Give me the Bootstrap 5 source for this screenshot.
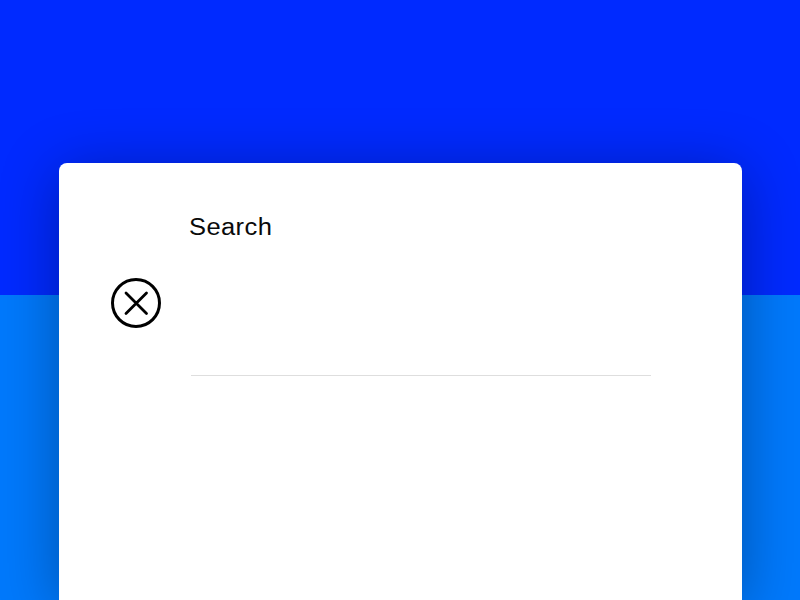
<!doctype html>
<html lang="en">
<head>
<meta charset="utf-8">
<title>Search</title>
<link rel="stylesheet" href="https://cdn.jsdelivr.net/npm/bootstrap@5.3.0/dist/css/bootstrap.min.css">
<style>
html, body { height: 600px; overflow: hidden; }
body { background: linear-gradient(#002aff 295px, #0079fc 295px); padding: 163px 58px 0 59px; }
.sheet { height: 437px; border: 0; border-radius: 8px 8px 0 0; background: #fff; box-shadow: 0 8px 60px rgba(0,0,0,.32); padding: 0 91px 0 52px; }
.close-mark { width: 50px; height: 50px; margin-top: 115px; padding: 0; border: 0; background: none; line-height: 0; }
.search-area { margin-left: 28px; padding-top: 50px; }
.search-label { font-family: "Liberation Sans", Arial, sans-serif; font-size: 23px; line-height: 28px; letter-spacing: .35px; color: #0a0a0a; margin: 0; transform: scaleX(1.11); transform-origin: left; }
.search-rule { height: 1px; margin: 134px 0 0 2px; background: #dedede; }
</style>
</head>
<body>
<div class="card sheet d-flex flex-row">
  <button class="close-mark flex-shrink-0" type="button" aria-label="Close">
    <svg width="50" height="50" viewBox="0 0 50 50" fill="none" stroke="#000" stroke-linecap="round">
      <circle cx="25" cy="25" r="23.5" stroke-width="3"/>
      <path d="M15 15 35.500 35.500M35.500 15 15 35.500" stroke-width="2.800"/>
    </svg>
  </button>
  <div class="search-area flex-grow-1">
    <p class="search-label">Search</p>
    <div class="search-rule"></div>
  </div>
</div>
<script src="https://cdn.jsdelivr.net/npm/bootstrap@5.3.0/dist/js/bootstrap.bundle.min.js"></script>
</body>
</html>
